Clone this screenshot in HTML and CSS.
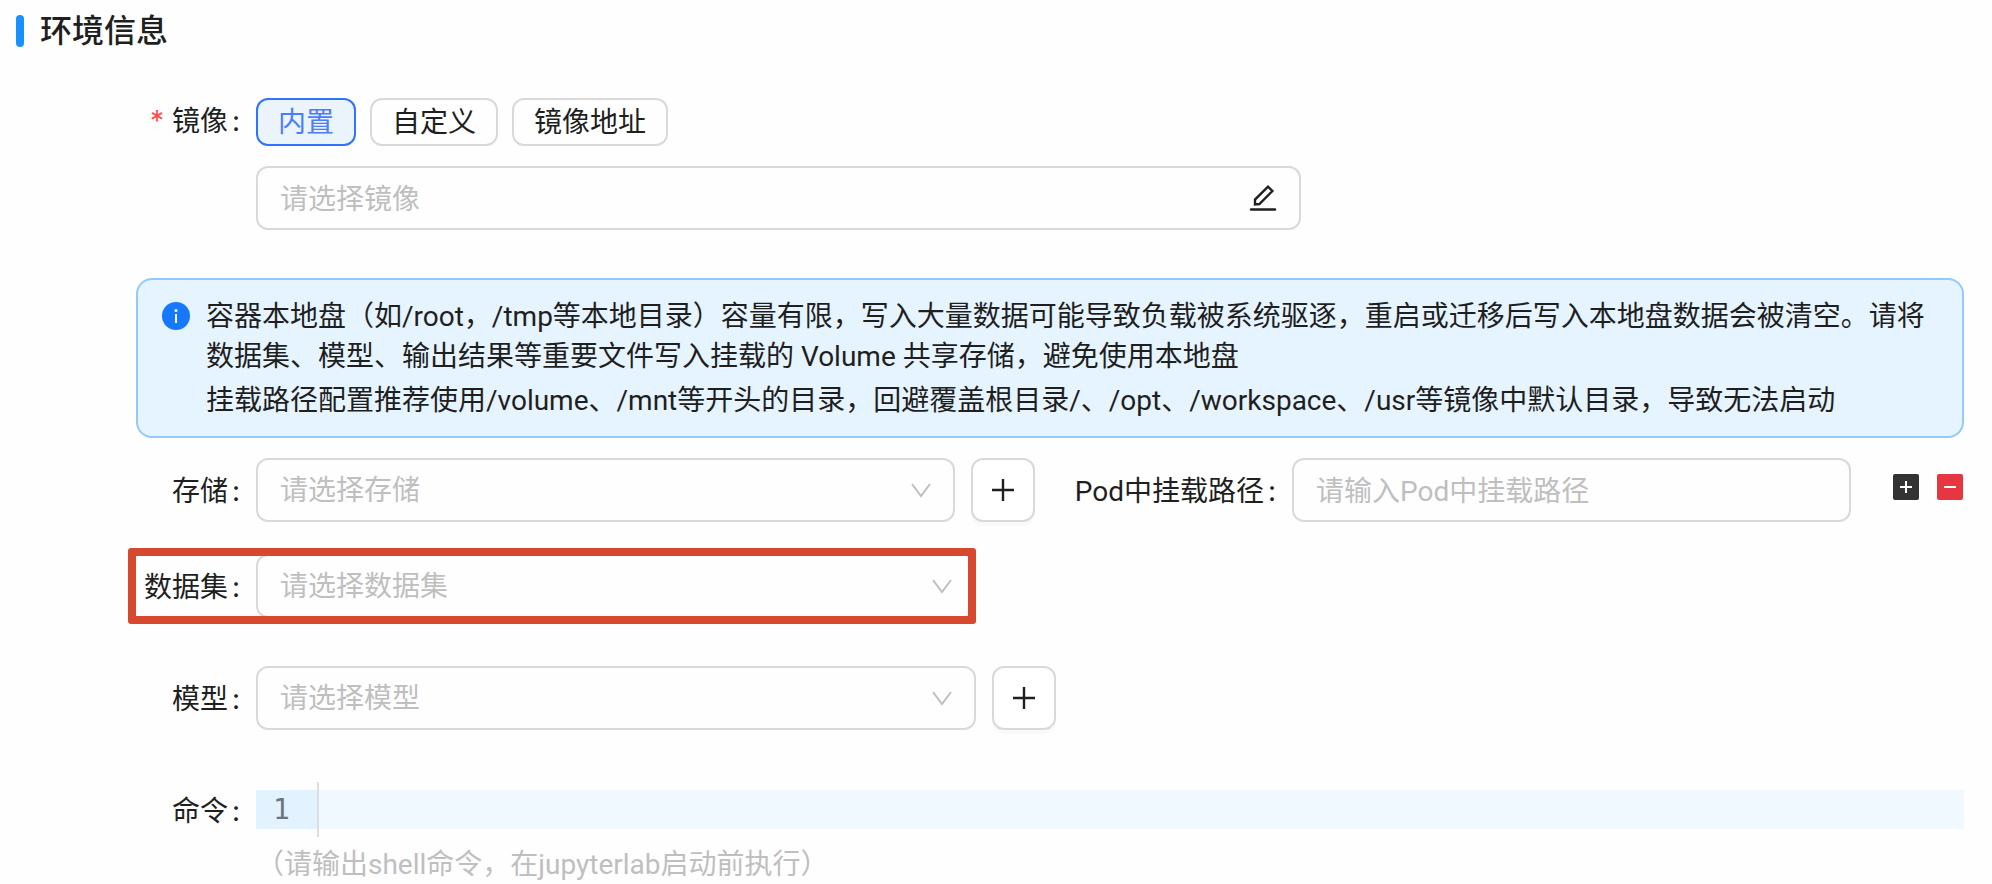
FILE: index.html
```html
<!DOCTYPE html>
<html lang="zh-CN">
<head>
    <meta charset="UTF-8">
    <meta name="viewport" content="width=device-width, initial-scale=1.0">
    <title>环境信息</title>
    <link rel="stylesheet" href="styles.css">
</head>
<body>
    <form class="env-form">
        <h2 class="section-title">环境信息</h2>

        <div class="form-row image-row">
            <label class="label required" for="image">镜像</label>
            <div class="image-field">
                <div class="tabs">
                    <button type="button" class="tab active">内置</button>
                    <button type="button" class="tab">自定义</button>
                    <button type="button" class="tab">镜像地址</button>
                </div>
                <div class="control image-control">
                    <input class="field" id="image" type="text" placeholder="请选择镜像">
                    <button type="button" class="edit-button" aria-label="编辑">
                        <svg viewBox="0 0 28 28" width="28" height="28" fill="none" stroke="currentColor">
                            <path d="M2 25.5H26" stroke-width="2.4" stroke-linecap="round"/>
                            <path d="M6 20.4V15.6L19 2.6L23.4 7L10.4 20L6 20.4Z" stroke-width="2.4"/>
                        </svg>
                    </button>
                </div>
            </div>
        </div>

        <div class="alert">
            <svg class="alert-icon" viewBox="0 0 28 28" width="28" height="28">
                <circle cx="14" cy="14" r="14" fill="#1677ff"/>
                <circle cx="14" cy="8.6" r="1.5" fill="#fff"/>
                <path d="M14 12V21" stroke="#fff" stroke-width="2"/>
            </svg>
            <div class="alert-text">
                <p>容器本地盘（如/root，/tmp等本地目录）容量有限，写入大量数据可能导致负载被系统驱逐，重启或迁移后写入本地盘数据会被清空。请将数据集、模型、输出结果等重要文件写入挂载的 Volume 共享存储，避免使用本地盘</p>
                <p>挂载路径配置推荐使用/volume、/mnt等开头的目录，回避覆盖根目录/、/opt、/workspace、/usr等镜像中默认目录，导致无法启动</p>
            </div>
        </div>

        <div class="form-row storage-row">
            <label class="label" for="storage">存储</label>
            <div class="storage-field">
                <div class="control storage-control">
                    <select class="field" id="storage"><option>请选择存储</option></select>
                    <svg class="arrow" viewBox="0 0 22 16" width="22" height="16"><path d="M2 2L11 14L20 2"/></svg>
                </div>
                <button type="button" class="add-button" aria-label="新增存储">
                    <svg viewBox="0 0 24 24" width="24" height="24"><path d="M12 1V23M1 12H23"/></svg>
                </button>
                <label class="label path-label" for="path">Pod中挂载路径</label>
                <div class="control path-control">
                    <input class="field" id="path" type="text" placeholder="请输入Pod中挂载路径">
                </div>
                <div class="row-actions">
                    <button type="button" class="square plus" aria-label="添加">
                        <svg viewBox="0 0 26 26" width="26" height="26"><path d="M13 7V19M7 13H19"/></svg>
                    </button>
                    <button type="button" class="square minus" aria-label="删除">
                        <svg viewBox="0 0 26 26" width="26" height="26"><path d="M7 13H19"/></svg>
                    </button>
                </div>
            </div>
        </div>

        <div class="form-row dataset-row">
            <label class="label" for="dataset">数据集</label>
            <div class="control select-control">
                <select class="field" id="dataset"><option>请选择数据集</option></select>
                <svg class="arrow" viewBox="0 0 22 16" width="22" height="16"><path d="M2 2L11 14L20 2"/></svg>
            </div>
            <div class="highlight"></div>
        </div>

        <div class="form-row model-row">
            <label class="label" for="model">模型</label>
            <div class="model-field">
                <div class="control select-control">
                    <select class="field" id="model"><option>请选择模型</option></select>
                    <svg class="arrow" viewBox="0 0 22 16" width="22" height="16"><path d="M2 2L11 14L20 2"/></svg>
                </div>
                <button type="button" class="add-button" aria-label="新增模型">
                    <svg viewBox="0 0 24 24" width="24" height="24"><path d="M12 1V23M1 12H23"/></svg>
                </button>
            </div>
        </div>

        <div class="form-row command-row">
            <label class="label" for="command">命令</label>
            <div class="command-field">
                <div class="editor">
                    <div class="gutter"><span class="line-number">1</span></div>
                    <textarea class="code" id="command" rows="1" spellcheck="false"></textarea>
                </div>
                <p class="hint">（请输出shell命令，在jupyterlab启动前执行）</p>
            </div>
        </div>
    </form>
</body>
</html>
```
FILE: styles.css
```css
* {
    box-sizing: border-box;
}

body {
    margin: 0;
    background-color: #fefefe;
    color: #1f1f1f;
    font-family: Roboto, "Noto Sans CJK SC", sans-serif;
    font-size: 28px;
    line-height: 40px;
}

button,
input,
select,
textarea {
    margin: 0;
    font: inherit;
    color: inherit;
}

button {
    padding: 0;
    cursor: pointer;
}

p {
    margin: 0;
}

svg {
    display: block;
}

.env-form {
    padding: 11px 28px 0 0;
}

.section-title {
    display: flex;
    align-items: center;
    gap: 16px;
    margin: 0 0 47px 16px;
    font-size: 32px;
    font-weight: 500;
    line-height: 40px;
}

.section-title::before {
    content: "";
    width: 8px;
    height: 32px;
    border-radius: 4px;
    background-color: #1890ff;
}

/* rows */
.form-row {
    display: grid;
    grid-template-columns: 256px minmax(0, 1fr);
    align-items: center;
}

.label {
    padding-top: 2px;
    padding-right: 16px;
    text-align: right;
    white-space: nowrap;
}

.label::after {
    content: ":";
    margin-left: 4px;
    font-family: Inter, sans-serif;
}

.required::before {
    content: "*";
    margin-right: 8px;
    color: #ff4d4f;
    font-family: Inter, sans-serif;
}

/* fields */
.control {
    position: relative;
}

.field {
    display: block;
    width: 100%;
    height: 64px;
    padding: 2px 22px 0;
    border: 2px solid #d9d9d9;
    border-radius: 12px;
    background-color: transparent;
    appearance: none;
    outline: none;
}

.field:focus {
    border-color: #1677ff;
}

.field::placeholder,
select.field {
    color: #bfbfbf;
    opacity: 1;
}

.arrow {
    position: absolute;
    top: 24px;
    right: 23px;
    fill: none;
    stroke: #bfbfbf;
    stroke-width: 2;
    pointer-events: none;
}

/* image */
.image-row {
    align-items: start;
    margin-bottom: 48px;
}

.tabs {
    display: flex;
    gap: 14px;
    margin-bottom: 20px;
}

.tab {
    height: 48px;
    padding: 2px 20px 0;
    border: 2px solid #d9d9d9;
    border-radius: 12px;
    background-color: transparent;
    line-height: 42px;
}

.tab.active {
    border-color: #2f73ff;
    background-color: #ebf3fb;
    color: #4a7dff;
}

.image-row .label {
    line-height: 42px;
}

.image-control {
    max-width: 1045px;
}

.edit-button {
    position: absolute;
    top: 18px;
    right: 24px;
    border: none;
    background: none;
}

/* alert */
.alert {
    display: flex;
    gap: 16px;
    margin: 0 0 20px 136px;
    padding: 17px 24px 15px;
    border: 2px solid #91caff;
    border-radius: 16px;
    background-color: #e6f4ff;
}

.alert-icon {
    flex: none;
    margin-top: 5px;
}

.alert-text p + p {
    margin-top: 4px;
}

/* storage, dataset, model */
.storage-row {
    margin-bottom: 32px;
}

.storage-field,
.model-field {
    display: flex;
    align-items: center;
    gap: 16px;
}

.storage-control {
    flex: 5 1 0;
}

.path-control {
    flex: 4 1 0;
}

.path-label {
    margin-left: 24px;
    margin-right: -16px;
}

.add-button {
    display: flex;
    align-items: center;
    justify-content: center;
    width: 64px;
    height: 64px;
    border: 2px solid #d9d9d9;
    border-radius: 12px;
    background-color: #fff;
    box-shadow: 0 4px 0 rgba(0, 0, 0, 0.02);
}

.add-button path {
    stroke: #1f1f1f;
    stroke-width: 2.4;
}

.row-actions {
    display: flex;
    gap: 18px;
    margin-left: 26px;
    padding-right: 1px;
    padding-bottom: 6px;
}

.square {
    border: none;
    border-radius: 2px;
    background-color: #333;
}

.square.minus {
    background-color: #e63740;
}

.square path {
    stroke: #fff;
    stroke-width: 2;
}

.dataset-row {
    position: relative;
    margin-bottom: 48px;
}

.select-control {
    width: 100%;
    max-width: 720px;
}

.highlight {
    position: absolute;
    top: -6px;
    bottom: -6px;
    left: 128px;
    width: 848px;
    border: 8px solid #d6492f;
    border-radius: 3px;
    pointer-events: none;
}

.model-row {
    margin-bottom: 52px;
}

/* command */
.command-row {
    align-items: start;
}

.command-row .label {
    padding-top: 9px;
}

.editor {
    display: flex;
}

.gutter {
    width: 63px;
    padding: 8px 0;
    border-right: 2px solid #ddd;
}

.line-number {
    display: block;
    padding-left: 17px;
    background-color: #e2f2ff;
    color: #6c757d;
    font-family: "DejaVu Sans Mono", monospace;
    line-height: 39px;
}

.code {
    flex: 1;
    height: 39px;
    margin-top: 8px;
    padding: 0 12px;
    border: none;
    outline: none;
    resize: none;
    overflow: hidden;
    background-color: #f0f9ff;
    font-family: "DejaVu Sans Mono", monospace;
    line-height: 39px;
}

.hint {
    padding-top: 9px;
    line-height: 38px;
    color: #bfbfbf;
}
```
